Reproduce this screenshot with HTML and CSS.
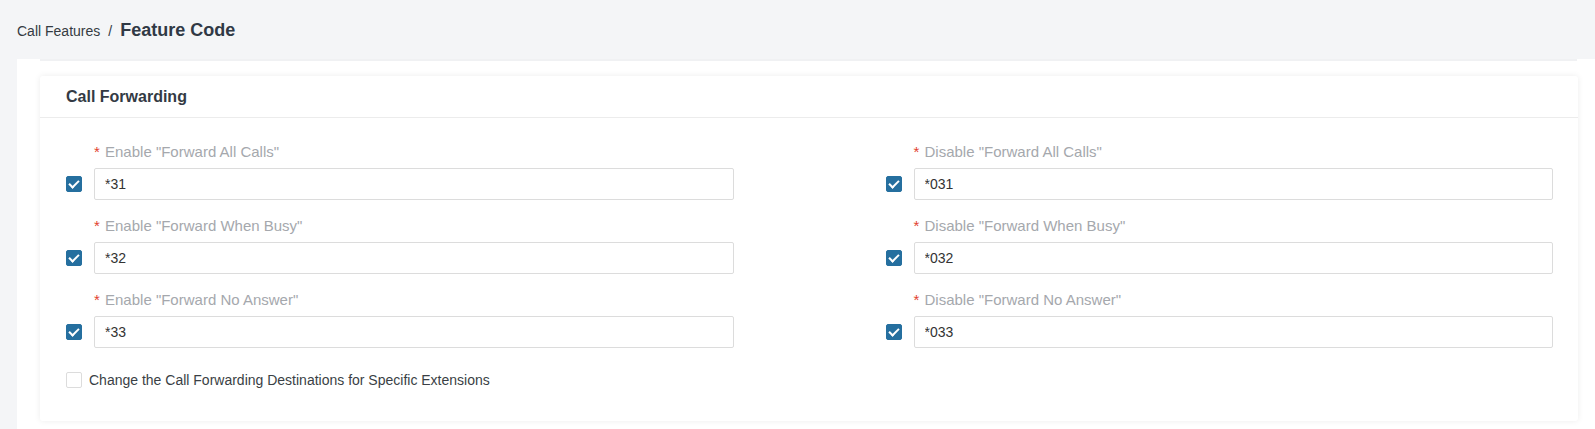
FILE: index.html
```html
<!DOCTYPE html>
<html lang="en">
<head>
    <meta charset="UTF-8">
    <title>Feature Code</title>
    <link rel="stylesheet" href="styles.css">
</head>
<body>

    <!-- Breadcrumb -->
    <div class="page-header">
        <span class="crumb">Call Features</span>
        <span class="crumb-sep">/</span>
        <span class="crumb-current">Feature Code</span>
    </div>

    <div class="page-body">
        <div class="card">
            <div class="card-header">Call Forwarding</div>
            <div class="card-body">
                <div class="form-grid">
                    <div class="form-item">
                        <div class="form-label"><span class="req">*</span> Enable "Forward All Calls"</div>
                        <div class="form-control">
                            <span class="checkbox checked"></span>
                            <input class="text-input" type="text" value="*31">
                        </div>
                    </div>
                    <div class="form-item">
                        <div class="form-label"><span class="req">*</span> Disable "Forward All Calls"</div>
                        <div class="form-control">
                            <span class="checkbox checked"></span>
                            <input class="text-input" type="text" value="*031">
                        </div>
                    </div>
                    <div class="form-item">
                        <div class="form-label"><span class="req">*</span> Enable "Forward When Busy"</div>
                        <div class="form-control">
                            <span class="checkbox checked"></span>
                            <input class="text-input" type="text" value="*32">
                        </div>
                    </div>
                    <div class="form-item">
                        <div class="form-label"><span class="req">*</span> Disable "Forward When Busy"</div>
                        <div class="form-control">
                            <span class="checkbox checked"></span>
                            <input class="text-input" type="text" value="*032">
                        </div>
                    </div>
                    <div class="form-item">
                        <div class="form-label"><span class="req">*</span> Enable "Forward No Answer"</div>
                        <div class="form-control">
                            <span class="checkbox checked"></span>
                            <input class="text-input" type="text" value="*33">
                        </div>
                    </div>
                    <div class="form-item">
                        <div class="form-label"><span class="req">*</span> Disable "Forward No Answer"</div>
                        <div class="form-control">
                            <span class="checkbox checked"></span>
                            <input class="text-input" type="text" value="*033">
                        </div>
                    </div>
                </div>

                <label class="check-line">
                    <span class="checkbox"></span>
                    Change the Call Forwarding Destinations for Specific Extensions
                </label>
            </div>
        </div>
    </div>

</body>
</html>
```

FILE: styles.css
```css
body {
    font-family: "Liberation Sans", Arial, sans-serif;
    margin: 0;
    background-color: #f4f5f7;
    color: #333;
    font-size: 14px;
    height: 429px;
    overflow: hidden;
}

.page-header {
    height: 59px;
    display: flex;
    align-items: center;
    padding-left: 17px;
    box-sizing: border-box;
    padding-top: 2px;
}

.crumb {
    font-size: 14px;
    color: #353b42;
}

.crumb-sep {
    margin: 0 8px 0 8px;
    color: #353b42;
}

.crumb-current {
    font-size: 18px;
    font-weight: bold;
    color: #303945;
}

.page-body {
    margin-left: 17px;
    background-color: #fff;
    padding: 17px 17px 20px 23px;
    position: relative;
}

/* faint shadow under the header band */
.page-body::before {
    content: "";
    position: absolute;
    left: 23px;
    right: 18px;
    top: 0;
    height: 2px;
    background: #f0f1f3;
}

.card {
    background-color: #fff;
    border-radius: 3px;
    box-shadow: 0 0 6px rgba(0, 0, 0, 0.08);
}

.card-header {
    height: 41px;
    display: flex;
    align-items: center;
    padding-left: 26px;
    font-size: 16px;
    font-weight: bold;
    color: #333a44;
    border-bottom: 1px solid #ececec;
}

.card-body {
    padding: 24px 25px 33px 26px;
}

.form-grid {
    display: grid;
    grid-template-columns: 1fr 1fr;
    column-gap: 152px;
}

.form-item {
    margin-bottom: 16px;
}

.form-label {
    height: 20px;
    line-height: 20px;
    padding-left: 28px;
    margin-bottom: 6px;
    font-size: 15px;
    color: #a5a8ad;
}

.req {
    color: #e2412e;
    margin-right: 1px;
}

.form-control {
    display: flex;
    align-items: center;
    gap: 12px;
}

.text-input {
    flex: 1;
    height: 32px;
    box-sizing: border-box;
    border: 1px solid #dcdcdc;
    border-radius: 2px;
    padding: 0 10px;
    font-family: inherit;
    font-size: 14px;
    color: #333;
    outline: none;
}

.checkbox {
    width: 16px;
    height: 16px;
    box-sizing: border-box;
    border: 1px solid #dcdcdc;
    border-radius: 2px;
    background-color: #fff;
    flex-shrink: 0;
    position: relative;
}

.checkbox.checked {
    background-color: #256f9f;
    border-color: #256f9f;
}

.checkbox.checked::after {
    content: "";
    position: absolute;
    left: 4px;
    top: 1px;
    width: 4px;
    height: 8px;
    border: solid #fff;
    border-width: 0 2.5px 2.5px 0;
    transform: rotate(45deg);
}

.check-line {
    display: flex;
    align-items: center;
    gap: 7px;
    margin-top: 8px;
    height: 16px;
    color: #3a3f45;
}
```
